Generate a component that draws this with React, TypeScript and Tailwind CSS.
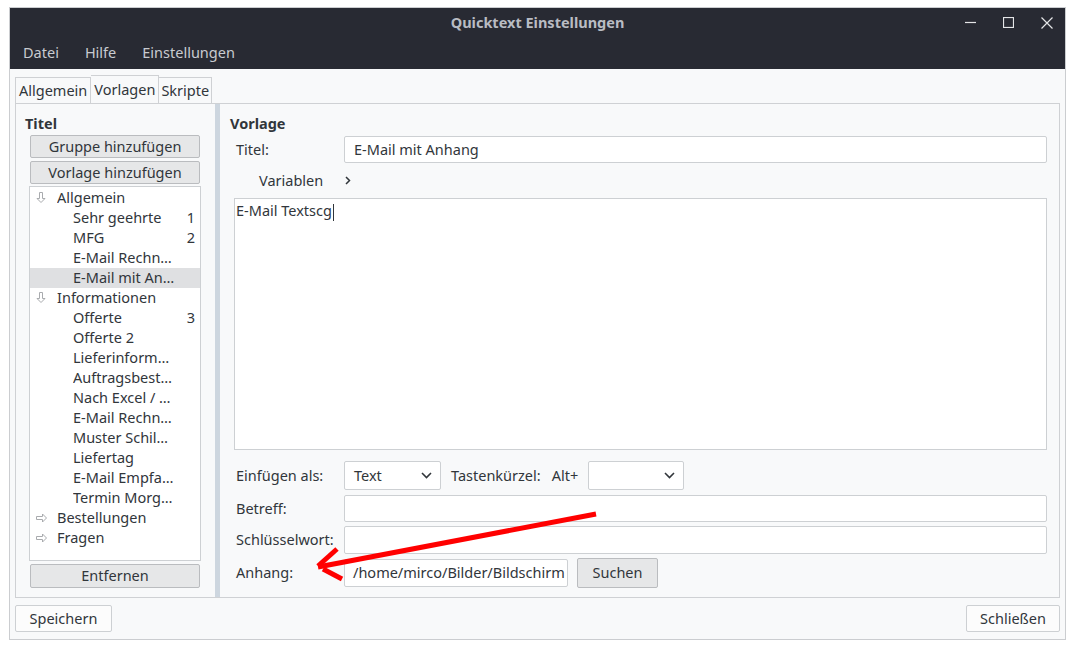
const font = { fontFamily: '"Noto Sans", "Open Sans", sans-serif' };

type Row = { label: string; level: 0 | 1; open?: boolean; num?: string; selected?: boolean };

const rows: Row[] = [
  { label: "Allgemein", level: 0, open: true },
  { label: "Sehr geehrte", level: 1, num: "1" },
  { label: "MFG", level: 1, num: "2" },
  { label: "E-Mail Rechn…", level: 1 },
  { label: "E-Mail mit An…", level: 1, selected: true },
  { label: "Informationen", level: 0, open: true },
  { label: "Offerte", level: 1, num: "3" },
  { label: "Offerte 2", level: 1 },
  { label: "Lieferinform…", level: 1 },
  { label: "Auftragsbest…", level: 1 },
  { label: "Nach Excel / …", level: 1 },
  { label: "E-Mail Rechn…", level: 1 },
  { label: "Muster Schil…", level: 1 },
  { label: "Liefertag", level: 1 },
  { label: "E-Mail Empfa…", level: 1 },
  { label: "Termin Morg…", level: 1 },
  { label: "Bestellungen", level: 0, open: false },
  { label: "Fragen", level: 0, open: false },
];

function ArrowDown() {
  return (
    <svg width="10" height="12" viewBox="0 0 10 12" className="shrink-0">
      <path d="M3.5 0.5h3v6h2.5L5 10.5 1 6.5h2.5z" fill="none" stroke="#a9abae" strokeWidth="1" />
    </svg>
  );
}

function ArrowRight() {
  return (
    <svg width="12" height="10" viewBox="0 0 12 10" className="shrink-0">
      <path d="M0.5 3.5v3h6v2.5L10.5 5 6.5 1v2.5z" fill="none" stroke="#a9abae" strokeWidth="1" />
    </svg>
  );
}

function Chevron() {
  return (
    <svg width="11" height="7" viewBox="0 0 11 7">
      <path d="M1 1l4.5 4.5L10 1" fill="none" stroke="#31363b" strokeWidth="1.6" />
    </svg>
  );
}

function TreeRow({ r }: { r: Row }) {
  return (
    <div className={`flex h-[20px] items-center pr-[5px] ${r.selected ? "bg-[#dfe0e2]" : ""}`}>
      {r.level === 0 ? (
        <div className="flex w-[27px] shrink-0 items-center pl-[6px]">
          {r.open ? <ArrowDown /> : <ArrowRight />}
        </div>
      ) : (
        <div className="w-[43px] shrink-0" />
      )}
      <span className="flex-1 overflow-hidden whitespace-nowrap">{r.label}</span>
      {r.num && <span>{r.num}</span>}
    </div>
  );
}

function GrayButton({ children, className = "" }: { children: React.ReactNode; className?: string }) {
  return (
    <div
      className={`flex items-center justify-center rounded-[2px] border border-[#babcbf] bg-[#e6e7e8] text-[#31363b] ${className}`}
    >
      {children}
    </div>
  );
}

function Field({ className = "", children }: { className?: string; children?: React.ReactNode }) {
  return (
    <div className={`flex items-center rounded-[2px] border border-[#cdd0d3] bg-white px-[9px] ${className}`}>
      {children}
    </div>
  );
}

export default function App() {
  return (
    <div className="relative h-[649px] w-[1075px] overflow-hidden bg-white pl-[9px] pt-[7px] text-[14.5px] text-[#31363b]" style={font}>
      <div className="flex h-[633px] w-[1057px] flex-col border border-[#cbcdd0] bg-[#f8f9fa]">
        {/* title + menu */}
        <div className="h-[61px] bg-[#282a33]">
          <div className="relative flex h-[29px] items-center justify-center">
            <span className="font-bold text-[#b9bcc3]">Quicktext Einstellungen</span>
            <div className="absolute right-[12px] top-0 flex h-[29px] items-center gap-[27px]">
              <svg width="11" height="11" viewBox="0 0 11 11">
                <path d="M0 5.5h11" stroke="#e4e5e7" strokeWidth="1.2" />
              </svg>
              <svg width="11" height="11" viewBox="0 0 11 11">
                <rect x="0.5" y="0.5" width="10" height="10" fill="none" stroke="#e4e5e7" strokeWidth="1.2" />
              </svg>
              <svg width="12" height="12" viewBox="0 0 12 12">
                <path d="M0.5 0.5l11 11M11.5 0.5l-11 11" stroke="#e4e5e7" strokeWidth="1.2" />
              </svg>
            </div>
          </div>
          <div className="flex h-[32px] items-center pl-[13px] text-[#c8cbd0]">
            <span className="mr-[26px]">Datei</span>
            <span className="mr-[26px]">Hilfe</span>
            <span>Einstellungen</span>
          </div>
        </div>

        <div className="flex flex-1 flex-col pl-[5px] pr-[5px] pt-[6px]">
          {/* tabs */}
          <div className="flex h-[28px] items-end">
            <div className="flex h-[26px] items-center border border-b-0 border-[#cfd1d4] px-[3px]">Allgemein</div>
            <div className="flex h-[28px] items-center border border-b-0 border-l-0 border-[#cfd1d4] px-[3px]">Vorlagen</div>
            <div className="flex h-[26px] items-center border border-b-0 border-l-0 border-[#cfd1d4] px-[2px]">Skripte</div>
          </div>

          {/* tab panel */}
          <div className="flex h-[495px] border border-[#cfd1d4]">
            {/* left */}
            <div className="flex w-[199px] shrink-0 flex-col pl-[13px] pr-[14px]">
              <div className="ml-[-4px] mt-[9px] font-bold leading-[20px]">Titel</div>
              <GrayButton className="mx-[1px] mt-[2px] h-[23px]">Gruppe hinzufügen</GrayButton>
              <GrayButton className="mx-[1px] mt-[3px] h-[23px]">Vorlage hinzufügen</GrayButton>
              <div className="mt-[2px] h-[375px] border border-[#cdd0d3] bg-white pt-[1px]">
                {rows.map((r, i) => (
                  <TreeRow key={i} r={r} />
                ))}
              </div>
              <GrayButton className="mx-[1px] mt-[3px] h-[24px]">Entfernen</GrayButton>
            </div>

            {/* splitter */}
            <div className="w-[5px] shrink-0 bg-[#cdd6df]" />

            {/* right */}
            <div className="flex flex-1 flex-col pl-[14px] pr-[12px]">
              <div className="ml-[-4px] mt-[9px] font-bold leading-[20px]">Vorlage</div>
              <div className="mt-[3px] flex h-[27px] items-center">
                <span className="w-[110px] pl-[2px]">Titel:</span>
                <Field className="h-[27px] flex-1">E-Mail mit Anhang</Field>
              </div>
              <div className="flex h-[35px] items-center">
                <span className="w-[111px] pl-[25px]">Variablen</span>
                <svg width="6" height="9" viewBox="0 0 6 9">
                  <path d="M1 1l3.5 3.5L1 8" fill="none" stroke="#31363b" strokeWidth="1.5" />
                </svg>
              </div>
              <div className="h-[252px] border border-[#cdd0d3] bg-white px-[1px] pt-[1px] leading-[20px]">
                E-Mail Textscg<span className="ml-[1px] inline-block h-[17px] w-[1px] bg-[#31363b] align-middle" />
              </div>

              <div className="mt-[11px] flex h-[29px] items-center">
                <span className="w-[110px] pl-[2px]">Einfügen als:</span>
                <Field className="h-[29px] w-[97px] justify-between pr-[8px]">
                  <span>Text</span>
                  <Chevron />
                </Field>
                <span className="ml-[10px]">Tastenkürzel:</span>
                <span className="ml-[11px]">Alt+</span>
                <Field className="ml-[10px] h-[29px] w-[96px] justify-end pr-[8px]">
                  <Chevron />
                </Field>
              </div>
              <div className="mt-[5px] flex h-[27px] items-center">
                <span className="w-[110px] pl-[2px]">Betreff:</span>
                <Field className="h-[27px] flex-1" />
              </div>
              <div className="mt-[4px] flex h-[28px] items-center">
                <span className="w-[110px] pl-[2px]">Schlüsselwort:</span>
                <Field className="h-[28px] flex-1" />
              </div>
              <div className="mt-[4px] flex h-[29px] items-center">
                <span className="w-[110px] pl-[2px]">Anhang:</span>
                <Field className="h-[28px] w-[224px] overflow-hidden whitespace-nowrap pl-[8px]">/home/mirco/Bilder/Bildschirm</Field>
                <GrayButton className="ml-[9px] h-[30px] w-[81px]">Suchen</GrayButton>
              </div>
            </div>
          </div>

          {/* bottom buttons */}
          <div className="mt-[7px] flex justify-between">
            <div className="flex h-[27px] w-[97px] items-center justify-center rounded-[2px] border border-[#cdd0d3] bg-[#fcfcfc]">Speichern</div>
            <div className="flex h-[27px] w-[94px] items-center justify-center rounded-[2px] border border-[#cdd0d3] bg-[#fcfcfc]">Schließen</div>
          </div>
        </div>
      </div>

      {/* red annotation arrow */}
      <svg className="pointer-events-none absolute left-0 top-0" width="1075" height="649" viewBox="0 0 1075 649">
        <path d="M596 514L318 567" stroke="#ff0000" strokeWidth="5" fill="none" />
        <path d="M337 549L318 566" stroke="#ff0000" strokeWidth="5" fill="none" />
        <path d="M323 569L342 579" stroke="#ff0000" strokeWidth="5" fill="none" />
      </svg>
    </div>
  );
}
